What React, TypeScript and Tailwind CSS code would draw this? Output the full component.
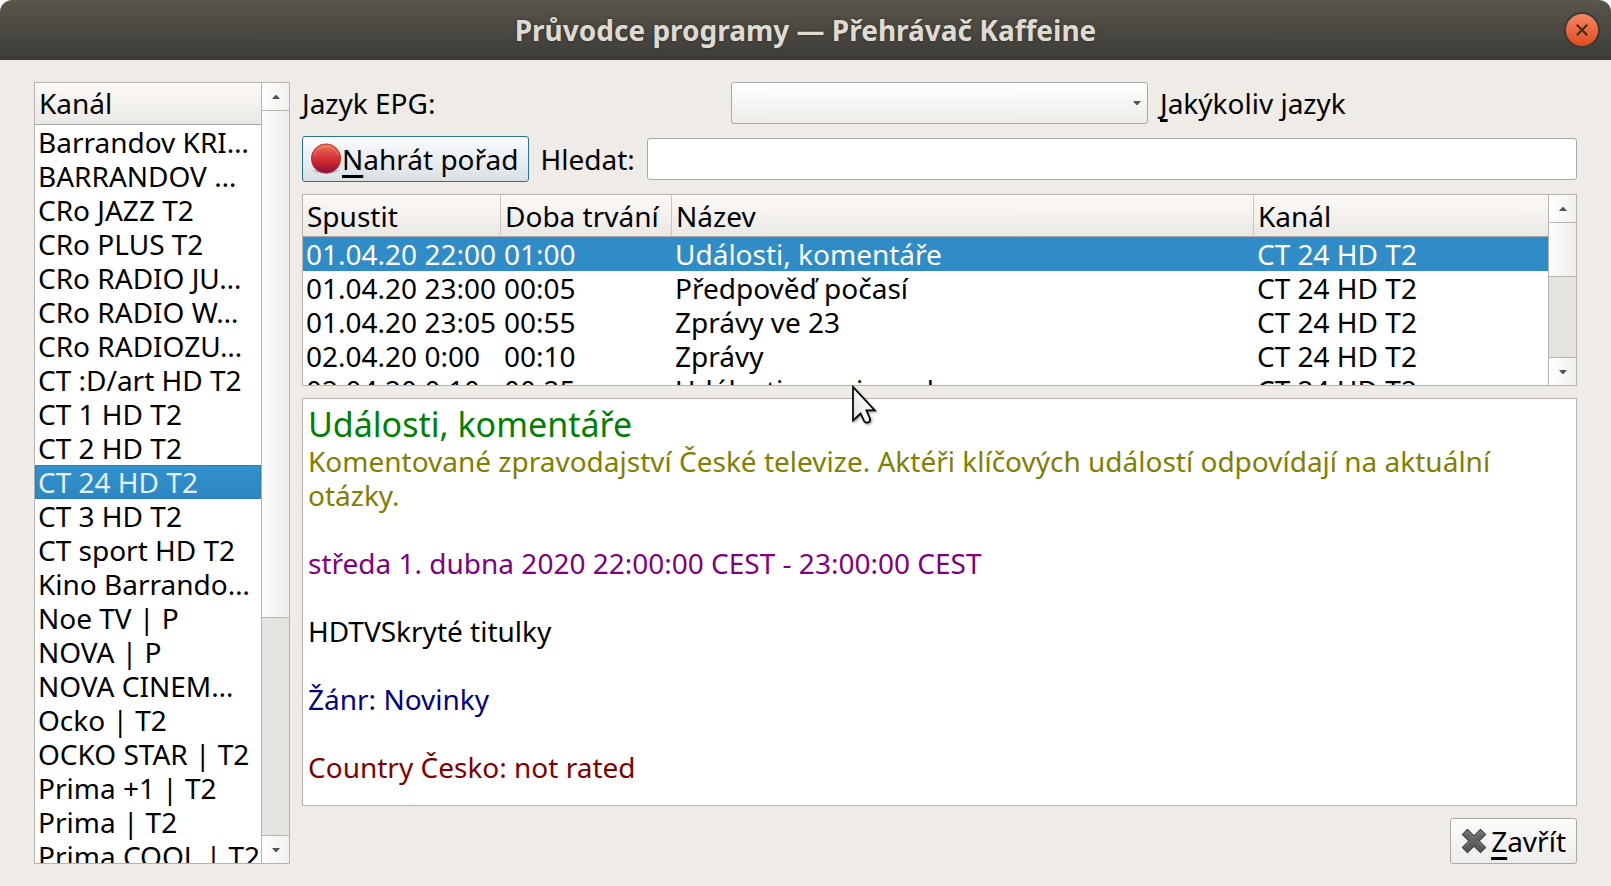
import React, { useState } from 'react';

const channels = [
  'Barrandov KRI…',
  'BARRANDOV …',
  'CRo JAZZ T2',
  'CRo PLUS T2',
  'CRo RADIO JU…',
  'CRo RADIO W…',
  'CRo RADIOZU…',
  'CT :D/art HD T2',
  'CT 1 HD T2',
  'CT 2 HD T2',
  'CT 24 HD T2',
  'CT 3 HD T2',
  'CT sport HD T2',
  'Kino Barrando…',
  'Noe TV | P',
  'NOVA | P',
  'NOVA CINEM…',
  'Ocko | T2',
  'OCKO STAR | T2',
  'Prima +1 | T2',
  'Prima | T2',
  'Prima COOL | T2',
];

const programs = [
  { start: '01.04.20 22:00', duration: '01:00', title: 'Události, komentáře', channel: 'CT 24 HD T2' },
  { start: '01.04.20 23:00', duration: '00:05', title: 'Předpověď počasí', channel: 'CT 24 HD T2' },
  { start: '01.04.20 23:05', duration: '00:55', title: 'Zprávy ve 23', channel: 'CT 24 HD T2' },
  { start: '02.04.20 0:00', duration: '00:10', title: 'Zprávy', channel: 'CT 24 HD T2' },
  { start: '02.04.20 0:10', duration: '00:25', title: 'Události v regionech', channel: 'CT 24 HD T2' },
];

function Arrow({ up = false }: { up?: boolean }) {
  return (
    <svg width="8" height="4" viewBox="0 0 8 4" fill="#555250" aria-hidden="true">
      {up ? <path d="M0 4L3 .6Q4-.4 5 .6L8 4Z" /> : <path d="M0 0L3 3.4Q4 4.4 5 3.4L8 0Z" />}
    </svg>
  );
}

function ScrollBar({ thumb }: { thumb: number }) {
  const button = 'flex h-7 shrink-0 items-center justify-center border-[#b6b3b0] bg-linear-to-r from-white to-[#f1f0ee]';
  return (
    <div className="flex w-7 shrink-0 flex-col border-l border-[#b6b3b0] bg-[#e4e3e0]">
      <button className={`${button} border-b`} aria-label="Nahoru">
        <Arrow up />
      </button>
      <div className="min-h-0 flex-1">
        <div
          className="border-b border-[#b6b3b0] bg-linear-to-r from-[#fdfdfc] to-[#eeedea]"
          style={{ height: `${thumb}%` }}
        />
      </div>
      <button className={`${button} border-t`} aria-label="Dolů">
        <Arrow />
      </button>
    </div>
  );
}

function RecordIcon() {
  return (
    <svg width="32" height="32" viewBox="0 0 32 32" aria-hidden="true">
      <defs>
        <linearGradient id="record-fill" x1="0" y1="0" x2="0" y2="1">
          <stop offset="0" stopColor="#f0805f" />
          <stop offset=".3" stopColor="#de4a45" />
          <stop offset=".65" stopColor="#c9232b" />
          <stop offset="1" stopColor="#7c1246" />
        </linearGradient>
        <radialGradient id="record-shadow">
          <stop offset="0" stopColor="#000" stopOpacity=".45" />
          <stop offset="1" stopColor="#000" stopOpacity="0" />
        </radialGradient>
      </defs>
      <ellipse cx="16" cy="28" rx="15" ry="3" fill="url(#record-shadow)" />
      <circle cx="16" cy="15.5" r="15" fill="url(#record-fill)" />
      <circle cx="16" cy="15.5" r="14.4" fill="none" stroke="#b92a33" strokeOpacity=".7" />
      <path d="M4 12A12.8 12.8 0 0 1 28 12" fill="none" stroke="#f6a98c" strokeOpacity=".5" />
    </svg>
  );
}

function CrossIcon() {
  return (
    <svg width="26" height="26" viewBox="0 0 26 26" aria-hidden="true">
      <defs>
        <linearGradient id="cross-fill" x1="0" y1="0" x2="0" y2="1">
          <stop offset="0" stopColor="#6f6f6f" />
          <stop offset="1" stopColor="#555" />
        </linearGradient>
      </defs>
      <path
        d="M6.5 1.5L13 8L19.5 1.5L24.5 6.5L18 13L24.5 19.5L19.5 24.5L13 18L6.5 24.5L1.5 19.5L8 13L1.5 6.5Z"
        fill="url(#cross-fill)"
        stroke="#444"
        strokeWidth="1.2"
        strokeLinejoin="round"
      />
      <path
        d="M3 6.5L6.5 3L13 9.5L19.5 3L23 6.5M9.5 13L3 19.5M16.5 13L23 19.5"
        fill="none"
        stroke="#959595"
        strokeOpacity=".8"
      />
    </svg>
  );
}

function Pointer() {
  return (
    <svg
      className="pointer-events-none absolute left-[549px] -top-[16px] z-10"
      width="30"
      height="44"
      viewBox="0 0 30 44"
      aria-hidden="true"
    >
      <defs>
        <linearGradient id="pointer-fill" x1="0" y1="1" x2=".8" y2=".5">
          <stop offset="0" stopColor="#dcdcdc" />
          <stop offset="1" stopColor="#fff" />
        </linearGradient>
        <filter id="pointer-shadow" x="-20%" y="-20%" width="150%" height="150%">
          <feDropShadow dx="1.2" dy="1.2" stdDeviation="1" floodOpacity=".4" />
        </filter>
      </defs>
      <path
        d="M1 4V37.5L8.6 30.5L12.2 38.2Q14 40.6 16.6 39.2Q18.8 37.8 17.8 35.2L14.4 27.4H22.8Z"
        fill="url(#pointer-fill)"
        stroke="#000"
        strokeWidth="1.7"
        filter="url(#pointer-shadow)"
      />
    </svg>
  );
}

function Mnemonic({ children }: { children: string }) {
  return (
    <span className="underline decoration-3 underline-offset-5 [text-decoration-skip-ink:none]">{children}</span>
  );
}

function App() {
  const [channel, setChannel] = useState('CT 24 HD T2');
  const [selected, setSelected] = useState(0);

  return (
    <div className="flex h-screen flex-col bg-white font-['Noto_Sans',sans-serif] text-[28px] leading-[34px] text-black">
      {/* Title bar */}
      <header className="relative flex h-[60px] shrink-0 items-center justify-center rounded-t-xl border-t-2 border-[#5d5a4c] bg-linear-to-b from-[#57544b] to-[#3d3c38] pb-[3px]">
        <h1 className="font-bold text-[#dfdbd2] [text-shadow:0_0_3px_#2b2a27]">
          Průvodce programy — Přehrávač Kaffeine
        </h1>
        <button
          className="absolute right-[13px] flex size-8 items-center justify-center rounded-full bg-linear-to-b from-[#f58562] to-[#e0491a] ring-2 ring-[#3a3935]"
          aria-label="Zavřít okno"
        >
          <svg width="12" height="12" viewBox="0 0 12 12" stroke="#3c3010" strokeWidth="2.2" aria-hidden="true">
            <path d="M.8.8L11.2 11.2M11.2.8L.8 11.2" />
          </svg>
        </button>
      </header>

      <main className="flex min-h-0 flex-1 gap-3 bg-[#efebe7] px-[34px] py-[22px]">
        {/* Channels */}
        <section className="flex w-64 shrink-0 border border-[#b6b3b0] bg-white">
          <div className="flex min-w-0 flex-1 flex-col overflow-hidden">
            <h2 className="h-[42px] shrink-0 border-b border-[#a9a6a3] bg-linear-to-b from-[#fcf9f7] to-[#eae8e5] px-1 pt-[3px]">
              Kanál
            </h2>
            <ul className="min-h-0 flex-1 overflow-hidden whitespace-nowrap">
              {channels.map((name) => (
                <li key={name}>
                  <button
                    onClick={() => setChannel(name)}
                    className={`block h-[34px] w-full px-[3px] text-left ${
                      name === channel
                        ? 'bg-linear-to-b from-[#3290cd] to-[#2d86c0] text-[#e3f0f8] inset-ring inset-ring-[#2a7db5]'
                        : ''
                    }`}
                  >
                    {name}
                  </button>
                </li>
              ))}
            </ul>
          </div>
          <ScrollBar thumb={70} />
        </section>

        <div className="flex min-w-0 flex-1 flex-col gap-3">
          <div className="grid h-[42px] shrink-0 grid-cols-3 items-center gap-3 whitespace-nowrap">
            <label htmlFor="epg-language">Jazyk EPG:</label>
            <div className="relative h-full">
              <select
                id="epg-language"
                className="h-full w-full appearance-none rounded-[3px] border border-[#aaa7a4] bg-linear-to-b from-white to-[#ecebe8]"
              >
                <option></option>
              </select>
              <span className="pointer-events-none absolute inset-y-0 right-[7px] flex items-center">
                <Arrow />
              </span>
            </div>
            <label htmlFor="epg-language">
              <Mnemonic>J</Mnemonic>akýkoliv jazyk
            </label>
          </div>

          <div className="flex h-[46px] shrink-0 items-center gap-3 whitespace-nowrap">
            <button className="flex h-full items-center rounded-[3px] border border-[#2a719f] bg-linear-to-b from-[#fbfcfd] to-[#d8e0e4] pr-[9px] pl-[7px]">
              <RecordIcon />
              <span>
                <Mnemonic>N</Mnemonic>ahrát pořad
              </span>
            </button>
            <label htmlFor="search">Hledat:</label>
            <input
              id="search"
              type="text"
              className="h-[42px] min-w-0 flex-1 rounded-[3px] border border-[#aaa7a4] bg-white px-2 outline-none"
            />
          </div>

          {/* Program table */}
          <section className="flex h-48 shrink-0 border border-[#b6b3b0] bg-white">
            <div className="min-w-0 flex-1 overflow-hidden">
              <table className="w-full table-fixed border-separate border-spacing-0 whitespace-nowrap">
                <colgroup>
                  <col className="w-[198px]" />
                  <col className="w-[171px]" />
                  <col />
                  <col className="w-[294px]" />
                </colgroup>
                <thead>
                  <tr className="h-[42px] bg-linear-to-b from-[#fcf9f7] to-[#eae8e5] text-left">
                    {['Spustit', 'Doba trvání', 'Název', 'Kanál'].map((title) => (
                      <th
                        key={title}
                        className="border-r border-b border-r-[#c9c6c3] border-b-[#a9a6a3] px-1 py-0 font-normal last:border-r-0"
                      >
                        {title}
                      </th>
                    ))}
                  </tr>
                </thead>
                <tbody>
                  {programs.map((p, i) => (
                    <tr
                      key={p.start}
                      onClick={() => setSelected(i)}
                      className={`h-[34px] ${i === selected ? 'bg-[#308cc6] text-white' : ''}`}
                    >
                      <td className="px-[3px] py-0">{p.start}</td>
                      <td className="px-[3px] py-0">{p.duration}</td>
                      <td className="px-[3px] py-0">{p.title}</td>
                      <td className="px-[3px] py-0">{p.channel}</td>
                    </tr>
                  ))}
                </tbody>
              </table>
            </div>
            <ScrollBar thumb={40} />
          </section>

          {/* Program details */}
          <section className="relative min-h-0 flex-1 border border-[#b6b3b0] bg-white px-[5px] pt-[5px]">
            <Pointer />
            <h2 className="text-[34px] leading-[40px] text-[#008000]">Události, komentáře</h2>
            <p className="mb-[34px] text-[#808000]">
              Komentované zpravodajství České televize. Aktéři klíčových událostí odpovídají na aktuální otázky.
            </p>
            <p className="mb-[34px] text-[#800080]">středa 1. dubna 2020 22:00:00 CEST - 23:00:00 CEST</p>
            <p className="mb-[34px]">HDTVSkryté titulky</p>
            <p className="mb-[34px] text-[#000080]">Žánr: Novinky</p>
            <p className="text-[#800000]">Country Česko: not rated</p>
          </section>

          <button className="flex h-[46px] shrink-0 items-center gap-1 self-end rounded-[3px] border border-[#aaa7a4] bg-linear-to-b from-[#fdfdfc] to-[#edecea] px-[10px]">
            <CrossIcon />
            <span>
              <Mnemonic>Z</Mnemonic>avřít
            </span>
          </button>
        </div>
      </main>
    </div>
  );
}

export default App;
